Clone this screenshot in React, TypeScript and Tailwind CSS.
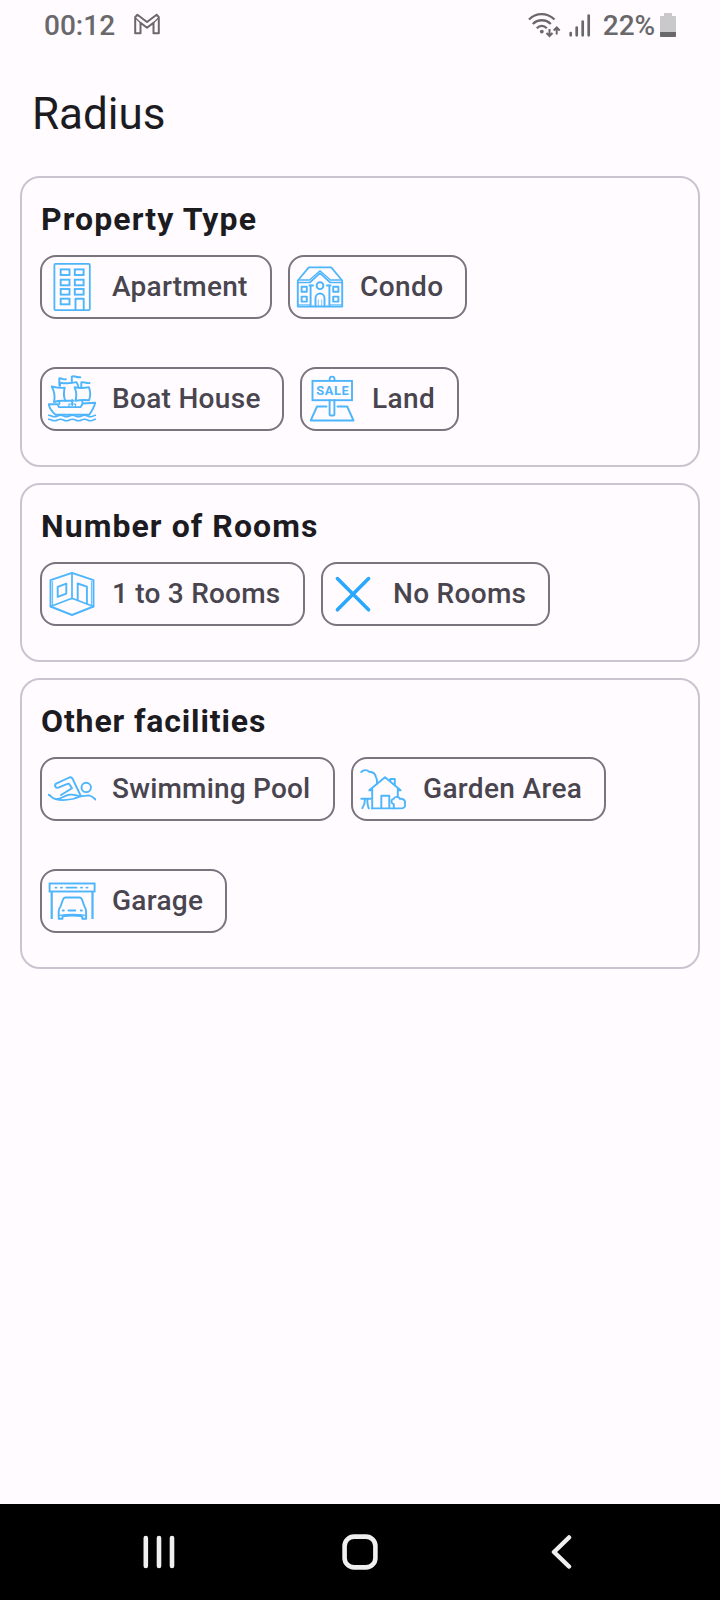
import type { ReactNode } from "react";

type ChipData = { label: string; icon: ReactNode; width: string; text: string };

function Icon({ children }: { children: ReactNode }) {
  return (
    <svg
      viewBox="0 0 48 48"
      className="size-12 shrink-0"
      fill="none"
      stroke="#4db5fb"
      strokeWidth="1.9"
      strokeLinecap="round"
      strokeLinejoin="round"
    >
      {children}
    </svg>
  );
}

const apartment = (
  <Icon>
    <rect x="6.4" y="0.9" width="35.4" height="46.2" rx="1" strokeWidth="1.8" />
    {[6.4, 16.7, 26, 35.7].map((y) => (
      <rect key={y} x="12.7" y={y} width="8.8" height="5.6" strokeLinejoin="miter" />
    ))}
    {[6.4, 16.7, 26].map((y) => (
      <rect key={y} x="26.8" y={y} width="8.8" height="5.6" strokeLinejoin="miter" />
    ))}
    <path d="M27.5 47V35.7h8.2V47" />
  </Icon>
);

const condo = (
  <Icon>
    <path d="M1.800 19.500V17.500L12.800 4.400h22.400L46.200 17.500v2H34.200L24 10.200 13.800 19.500z" strokeWidth="1.700" />
    <path d="M2.500 17H13.500L24 7.800 34.500 17h11" strokeWidth="1.300" />
    <path d="M1.800 19.500v24h44.400v-24M14.600 22.500v21M33.400 22.500v21" />
    <path d="M2 41.700h12.600M33.400 41.700h12.800" strokeWidth="0.8" />
    <path d="M13.500 22.500h3.500M34.500 22.500h-3.500" />
    <circle cx="24" cy="22.700" r="3.400" />
    <path d="M19.500 43.400V35a4.500 4.500 0 0 1 9 0v8.400" />
    <path d="M22.300 43v-6M25.700 43v-6" strokeWidth="0.7" />
    <path d="M5.600 23.700h5.200v5H5.600zM5.600 33.600h5.200v5H5.600zM37.200 23.700h5.200v5h-5.200zM37.200 33.600h5.200v5h-5.200z" />
  </Icon>
);

const boat = (
  <Icon>
    <path d="M.8 29.300h8.800l1.400 2.800h21.600l2.200-3.600 12.400-.8c-1 5-3.600 8.600-6 12H7.600C4 36.600 1.400 33.500.8 29.300z" />
    <path d="M3.700 11.500c4.300 1.200 8.500 1.600 13 1.200-1.200 4.500-1 9 .6 13.200-4.200-.3-8 0-11.300 1.100 1.300-5.500.4-10.600-2.300-15.500z" />
    <path d="M12 11V7.700c5.500.8 11 .8 16.500-.5 1 1.600 1.600 3 1.800 4.500M17.400 25.700h7.800" />
    <path d="M26.600 12.300c5 .9 9.700.9 14.300-.2 1.700 4.500 1.700 9 .1 13.200-4.700-.6-9.300-.5-13.700.6 1.500-4.500 1.400-9-.7-13.600z" />
    <path d="M11.300 10V3.400c2.300-.8 4 1.800 6.600.8M23.800 7.500V1.600c3-1.200 5 1.300 8.500.6M33.300 12V7.400c3-1 5 1.400 8.300.6M11.300 27v2M24.200 25v5M34.400 26v2.500" />
    <path d="M21 31.500v-2.500h6.500v2.500" strokeWidth="1.200" />
    <path d="M.5 40.200c3 0 3 1.600 6 1.600s3-1.600 6-1.600 3 1.600 6 1.600 3-1.600 6-1.600 3 1.600 6 1.600 3-1.600 6-1.600 3 1.600 6 1.600 3-1.600 5-1.600M.5 44.200c3 0 3 1.600 6 1.600s3-1.600 6-1.600 3 1.600 6 1.600 3-1.600 6-1.600 3 1.600 6 1.600 3-1.600 6-1.600 3 1.600 6 1.600 3-1.600 5-1.600" strokeWidth="1.600" />
  </Icon>
);

const land = (
  <Icon>
    <path d="M21.700 5.600V4a2.400 2.400 0 0 1 4.800 0v1.600" />
    <rect x="4.500" y="5.900" width="39.500" height="19.300" strokeLinejoin="miter" />
    <text
      x="8.300"
      y="20.300"
      fontFamily="Roboto, sans-serif"
      fontSize="12.800"
      fontWeight="700"
      textLength="32.500"
      fill="#4db5fb"
      stroke="none"
    >
      SALE
    </text>
    <path d="M21.600 25.200v14.200c0 1.500 4.800 1.500 4.800 0V25.200M18.500 31.500H9L2.700 45.500h42.800L39.200 31.500h-9.700" />
  </Icon>
);

const rooms = (
  <Icon>
    <path d="M24 2.800 45.500 10.200v26.300L24 45 2.500 36.500V10.200z" />
    <path d="M4.600 11.500v23.800M43.400 11.500v23.800" strokeWidth="0.900" />
    <path d="M24 2.800v26M2.500 36.500 24 28.300l21.500 8.200" strokeWidth="1.700" />
    <path d="M9.700 16.800 18.300 13.700v9.900L9.700 26.900z" />
    <path d="M29.700 30.300V13.500l9.200 3.200v16.800" />
  </Icon>
);

const cross = (
  <Icon>
    <path d="M8.400 8.600 39.600 39.800M39.600 8.600 8.400 39.800" stroke="#29a8fc" strokeWidth="3.600" />
  </Icon>
);

const swimming = (
  <Icon>
    <path d="M.5 29.800c2.200.3 3.300 4.300 7.500 4.300 6 0 7-3 12.500-4.300 4.500-.8 7 .4 10.500 1.400 3 .8 6-.8 9.500-.8 3 .2 5.200 2.500 7 4" />
    <path d="M7.500 34.200c6 1.500 12 .8 17-.2 3-.8 5-1.600 7.500-2.400" strokeWidth="1.700" />
    <path d="M32.600 30.500 24.500 13.700c-.7-1.300-1.800-1.700-3.200-1.200L8.600 18.300c-2.700 1.500-1.500 5.200 1.600 4.400l9.300-3.800c1-.4 1.700-.1 2.200.8l2.300 3.600L13 30" />
    <circle cx="38.200" cy="22.400" r="4.700" />
  </Icon>
);

const garden = (
  <Icon>
    <path d="M2.300 7c2.300-2.200 5.600-2.200 7.800-.3 4.600-.2 6.700 3.300 6.700 5.300 1.700 2 .9 4 1.200 6.500" />
    <path d="M10.300 25.300 26 12.300l15.600 13M13.200 43.400V23.500M38.800 32v-8.500M10.300 25.300l3-.2M41.600 25.300l-2.800-.2M31.300 16v-2h4.500v6.500" />
    <path d="M22.300 43.200V30.800h8v12.400M2.300 33.800h9.500M6 34c0 4-1 6.700-2.700 9.300M8.300 34c0 4 .3 7 1.500 9.300M13.200 43.400h21.600" />
    <path d="M34.800 43.400v-4.200c-3-.6-3.200-4.700-.2-5.300 1-2.700 5.300-2.700 6.200 0 3-.8 6.200 1.700 5 4.500 1.200 2.300-.3 5-3.300 5z" />
  </Icon>
);

const garage = (
  <Icon>
    <rect x="1.600" y="6.500" width="45" height="8" strokeLinejoin="miter" />
    <path d="M3.700 14.500v27.600M44.500 14.500v27.600" strokeWidth="2.200" strokeLinecap="butt" />
    <path d="M7.500 10.600h1M13 10.600h1M18.500 10.600h10M33 10.600h1M38.500 10.600h1" />
    <path d="m12.600 29.300 2.500-7c.5-1.300 1.300-1.800 2.700-1.800h13.400c1.400 0 2.200.5 2.700 1.800l2.500 7c1.300 1.700 1.700 3.200 1.700 5v7.500h-3.800V39.200c-6.500-1-13.300-1-19.800 0v2.600h-3.800V34.300c0-1.800.6-3.500 1.900-5z" />
    <path d="M11.200 38.300c8.500-1.300 18-1.300 26.600 0" strokeWidth="1.200" />
    <path d="M14.800 33.600h1M20.500 33.600h6.800M32.800 33.600h1" strokeWidth="2" />
  </Icon>
);

const sections: { title: string; spacing: string; rows: ChipData[][] }[] = [
  {
    title: "Property Type",
    spacing: "tracking-[1.1px]",
    rows: [
      [
        { label: "Apartment", icon: apartment, width: "w-[232px]", text: "tracking-[0.25px]" },
        { label: "Condo", icon: condo, width: "w-[179px]", text: "tracking-[0.4px]" },
      ],
      [
        { label: "Boat House", icon: boat, width: "w-[244px]", text: "tracking-[0.3px]" },
        { label: "Land", icon: land, width: "w-[159px]", text: "tracking-[0.4px]" },
      ],
    ],
  },
  {
    title: "Number of Rooms",
    spacing: "tracking-[1.07px]",
    rows: [
      [
        { label: "1 to 3 Rooms", icon: rooms, width: "w-[265px]", text: "tracking-[0.22px]" },
        { label: "No Rooms", icon: cross, width: "w-[229px]", text: "tracking-[0.3px]" },
      ],
    ],
  },
  {
    title: "Other facilities",
    spacing: "tracking-[0.86px]",
    rows: [
      [
        { label: "Swimming Pool", icon: swimming, width: "w-[295px]", text: "tracking-[0.2px]" },
        { label: "Garden Area", icon: garden, width: "w-[255px]", text: "tracking-[0.35px]" },
      ],
      [{ label: "Garage", icon: garage, width: "w-[187px]", text: "tracking-[0.3px]" }],
    ],
  },
];

function Chip({ label, icon, width, text }: ChipData) {
  return (
    <button
      className={`flex h-16 items-center gap-4 rounded-2xl border-2 border-[#79747e] pl-1.5 ${width}`}
    >
      {icon}
      <span className={`pb-px text-[28px] leading-10 font-medium whitespace-nowrap text-[#49454f] ${text}`}>
        {label}
      </span>
    </button>
  );
}

function StatusBar() {
  return (
    <div className="flex h-[50px] items-center justify-between pr-11 pl-11 text-[28px] text-[#69686b]">
      <div className="flex items-center gap-[18px]">
        <span className="pt-0.5 leading-8 font-medium">00:12</span>
        <svg viewBox="0 0 28 22" className="mb-[3px] h-[22px] w-7" fill="none" stroke="currentColor" strokeWidth="2" strokeLinejoin="round">
          <path d="M2.200 20.300V4.200L4.400 1.700 14 9l9.600-7.300 2.200 2.500v16.100h-5.300V9.700L14 14.800 7.500 9.700v10.600z" />
          <path d="M2.800 5.200 7.500 9.700M25.200 5.200l-4.700 4.500" strokeWidth="1.200" />
        </svg>
      </div>
      <div className="flex items-center">
        <svg viewBox="0 0 33 25" className="mr-2 h-[25px] w-[33px]" fill="none" stroke="currentColor" strokeWidth="2.300">
          <path d="M1 6.500C8-.6 19-.6 26.500 6.500M4.800 11c5-5 13-5 18 0M8.800 15.200c3-3 7-3 10 0" />
          <circle cx="13.800" cy="18.600" r="1.900" fill="currentColor" stroke="none" />
          <path d="M21.500 16v7M18.500 20l3 3 3-3M28.700 21.500v-7M25.700 17.500l3-3 3 3" strokeWidth="2" />
        </svg>
        <svg viewBox="0 0 22 23" className="mr-3 h-[23px] w-[22px]" stroke="currentColor" strokeWidth="2.700" strokeLinecap="round">
          <path d="M1.700 19v2.300M7.700 13.500v7.800M13.700 7.500v13.800M19.700 1.500v19.800" />
        </svg>
        <span className="pt-0.5 text-[28px] leading-8 font-medium tracking-[-0.1px]">22%</span>
        <svg viewBox="0 0 16 24" className="ml-[5px] h-6 w-4">
          <path d="M4 3V0h8v3h3a1 1 0 0 1 1 1v15H0V4a1 1 0 0 1 1-1z" fill="#c9c8ca" />
          <path d="M0 19h16v4a1 1 0 0 1-1 1H1a1 1 0 0 1-1-1z" fill="currentColor" />
        </svg>
      </div>
    </div>
  );
}

export default function App() {
  return (
    <div className="flex h-[1600px] w-[720px] flex-col bg-[#fffbff] font-[Roboto,sans-serif] text-[#1c1b1f]">
      <StatusBar />
      <header className="flex h-[126px] items-center pt-0.5 pl-8">
        <h1 className="text-[44px] leading-[56px]">Radius</h1>
      </header>
      <main className="flex flex-1 flex-col gap-4 px-5">
        {sections.map((section) => (
          <section key={section.title} className="rounded-[20px] border-2 border-[#cac4d0] px-[18px] pt-[17px] pb-[34px]">
            <h2 className={`mb-3 pl-px text-[32px] leading-[48px] font-bold ${section.spacing}`}>{section.title}</h2>
            <div className="flex flex-col gap-12">
              {section.rows.map((row, i) => (
                <div key={i} className="flex gap-4">
                  {row.map((chip) => (
                    <Chip key={chip.label} {...chip} />
                  ))}
                </div>
              ))}
            </div>
          </section>
        ))}
      </main>
      <nav className="flex h-24 items-center justify-between bg-black pr-[148px] pl-[143px]">
        <svg viewBox="0 0 32 36" className="h-9 w-8" stroke="#f0f0f0" strokeWidth="4.600" strokeLinecap="round">
          <path d="M2.800 4v28M16 4v28M29 4v28" />
        </svg>
        <svg viewBox="0 0 36 36" className="-ml-[5px] h-9 w-9" fill="none" stroke="#f0f0f0" strokeWidth="4.600">
          <rect x="2.600" y="2.600" width="30.800" height="30.800" rx="9.500" />
        </svg>
        <svg viewBox="0 0 22 36" className="h-9 w-[22px]" fill="none" stroke="#f0f0f0" strokeWidth="4.500" strokeLinecap="round" strokeLinejoin="round">
          <path d="M19 3.500 4 18l15 14.500" />
        </svg>
      </nav>
    </div>
  );
}
